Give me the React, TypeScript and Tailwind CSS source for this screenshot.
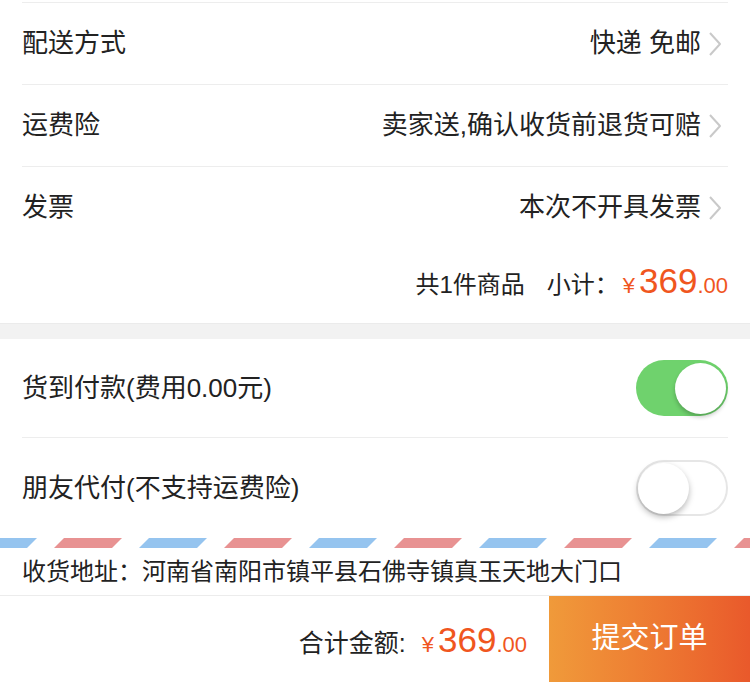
import React from "react";

const FONT = "font-['Liberation_Sans','Noto_Sans_CJK_SC',sans-serif]";

function Chevron() {
  return (
    <svg width="16" height="26" viewBox="0 0 16 26" className="ml-[6px] shrink-0">
      <polyline
        points="3,2 13,13 3,24"
        fill="none"
        stroke="#c9c9c9"
        strokeWidth="2"
        strokeLinejoin="round"
      />
    </svg>
  );
}

function LinkRow({ label, value }: { label: string; value: string }) {
  return (
    <div className="mx-[22px] flex h-[82px] items-center justify-between border-t border-[#ededed]">
      <span className="text-[26px] text-[#222]">{label}</span>
      <div className="mr-[5px] flex items-center">
        <span className="text-[26px] text-[#222]">{value}</span>
        <Chevron />
      </div>
    </div>
  );
}

function Toggle({ on }: { on: boolean }) {
  if (on) {
    return (
      <div className="flex h-[56px] w-[92px] items-center justify-end rounded-full bg-[#6fd26d] pr-[2px]">
        <div className="h-[51px] w-[51px] rounded-full bg-white shadow-[0_3px_4px_rgba(0,0,0,0.22)]" />
      </div>
    );
  }
  return (
    <div className="flex h-[56px] w-[92px] items-center rounded-full border-2 border-[#e6e6e6] bg-white">
      <div className="h-[51px] w-[51px] rounded-full bg-white shadow-[0_3px_6px_rgba(0,0,0,0.28)]" />
    </div>
  );
}

function Price() {
  return (
    <span className="text-[#f0561e]">
      <span className="mr-[4px] text-[22px]">¥</span>
      <span className="text-[35px]">369</span>
      <span className="text-[22px]">.00</span>
    </span>
  );
}

function AirmailStripe() {
  const ids = [-1, 0, 1, 2, 3, 4, 5];
  return (
    <svg width="750" height="10" viewBox="0 0 750 10" className="block">
      {ids.map((i) => {
        const r = 64 + 170 * i;
        const b = -21 + 170 * i;
        return (
          <g key={i}>
            <polygon points={`${b},0 ${b + 58},0 ${b + 48},10 ${b - 10},10`} fill="#95c4ef" />
            <polygon points={`${r},0 ${r + 58},0 ${r + 48},10 ${r - 10},10`} fill="#e89292" />
          </g>
        );
      })}
    </svg>
  );
}

export default function App() {
  return (
    <div className={`${FONT} h-[683px] w-[750px] overflow-hidden bg-white`}>
      <div className="h-[2px]" />
      <LinkRow label="配送方式" value="快递 免邮" />
      <LinkRow label="运费险" value="卖家送,确认收货前退货可赔" />
      <LinkRow label="发票" value="本次不开具发票" />

      <div className="flex h-[75px] items-baseline justify-end pr-[22px] pt-[7px]">
        <span className="mr-[22px] text-[24px] text-[#222]">共1件商品</span>
        <span className="mr-[4px] text-[24px] text-[#222]">小计：</span>
        <Price />
      </div>

      <div className="h-[16px] border-t border-[#ebebeb] bg-[#f2f2f2]" />

      <div className="flex h-[98px] items-center justify-between pl-[22px] pr-[22px]">
        <span className="text-[26px] text-[#222]">货到付款(费用0.00元)</span>
        <Toggle on />
      </div>
      <div className="mx-[22px] h-px bg-[#ededed]" />
      <div className="flex h-[100px] items-center justify-between pl-[22px] pr-[22px]">
        <span className="text-[26px] text-[#222]">朋友代付(不支持运费险)</span>
        <Toggle on={false} />
      </div>

      <AirmailStripe />
      <div className="flex h-[48px] items-center border-b border-[#ececec] pl-[22px]">
        <span className="text-[24px] text-[#222]">收货地址：河南省南阳市镇平县石佛寺镇真玉天地大门口</span>
      </div>

      <div className="flex h-[86px] items-stretch">
        <div className="flex flex-1 items-baseline justify-end pr-[22px] pt-[18px]">
          <span className="mr-[16px] text-[25px] text-[#222]">合计金额:</span>
          <Price />
        </div>
        <button className="flex w-[201px] items-center justify-center bg-gradient-to-r from-[#f09a3a] to-[#e9592b] text-[29px] text-white">
          提交订单
        </button>
      </div>
    </div>
  );
}
